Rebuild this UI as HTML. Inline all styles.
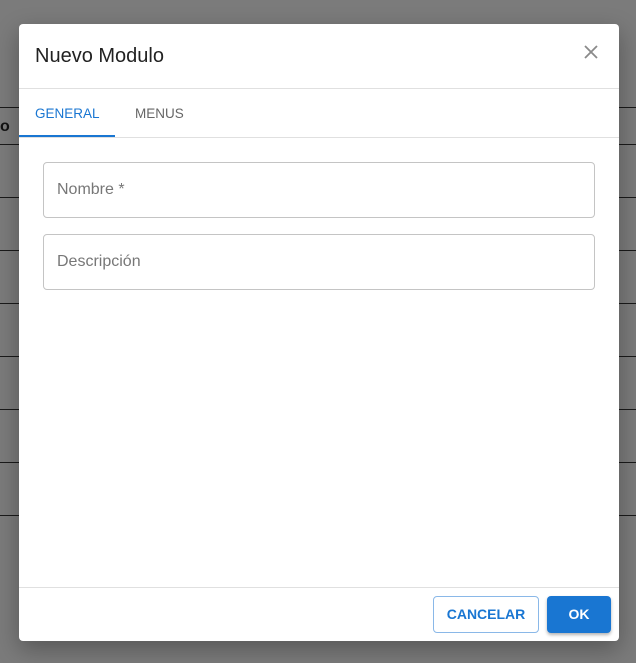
<!DOCTYPE html><html><head><style>
body{margin:0;width:636px;height:663px;background:#7b7b7b;position:relative;overflow:hidden;font-family:"Liberation Sans",Arial,sans-serif}
.l{position:absolute;left:0;width:636px;height:1px;background:#1a1a1a}
.d{position:absolute;left:19px;top:24px;width:600px;height:617px;background:#fff;border-radius:4px;box-shadow:0 8px 24px rgba(0,0,0,.3)}
.t{position:absolute;left:16px;top:21px;font-size:20px;color:#222}
.x{position:absolute;left:565px;top:21px}
.hr{position:absolute;left:0;width:600px;height:1px;background:#e0e0e0}
.tab{position:absolute;top:82px;font-size:13.5px;letter-spacing:0}
.in{position:absolute;left:24px;width:550px;height:54px;border:1px solid #c4c4c4;border-radius:4px}
.in span{position:absolute;left:13px;top:18px;font-size:16px;color:#777}
.b{position:absolute;top:572px;height:37px;border-radius:4px;font-size:14px;font-weight:bold;letter-spacing:0;box-sizing:border-box;text-align:center;line-height:35px}
</style></head><body>
<div class="l" style="top:107px"></div><div class="l" style="top:144px"></div><div class="l" style="top:197px"></div><div class="l" style="top:250px"></div><div class="l" style="top:303px"></div><div class="l" style="top:356px"></div><div class="l" style="top:409px"></div><div class="l" style="top:462px"></div><div class="l" style="top:515px"></div>
<div style="position:absolute;left:0;top:118px;font-size:16px;font-weight:bold;color:#111">o</div>
<div class="d">
<div class="t">Nuevo Modulo</div>
<svg class="x" width="14" height="14" viewBox="0 0 14 14"><path d="M1 1L13 13M13 1L1 13" stroke="#8a8a8a" stroke-width="1.8"/></svg>
<div class="hr" style="top:64px"></div>
<div class="tab" style="left:16px;color:#1976d2">GENERAL</div>
<div class="tab" style="left:116px;color:#666">MENUS</div>
<div style="position:absolute;left:0;top:111px;width:96px;height:2px;background:#1976d2"></div>
<div class="hr" style="top:113px"></div>
<div class="in" style="top:138px"><span>Nombre *</span></div>
<div class="in" style="top:210px"><span>Descripción</span></div>
<div class="hr" style="top:563px"></div>
<div class="b" style="left:414px;width:106px;border:1px solid #8ab8e8;color:#1976d2">CANCELAR</div>
<div class="b" style="left:528px;width:64px;background:#1976d2;color:#fff;box-shadow:0 2px 3px rgba(0,0,0,.3);line-height:37px">OK</div>
</div>
</body></html>
